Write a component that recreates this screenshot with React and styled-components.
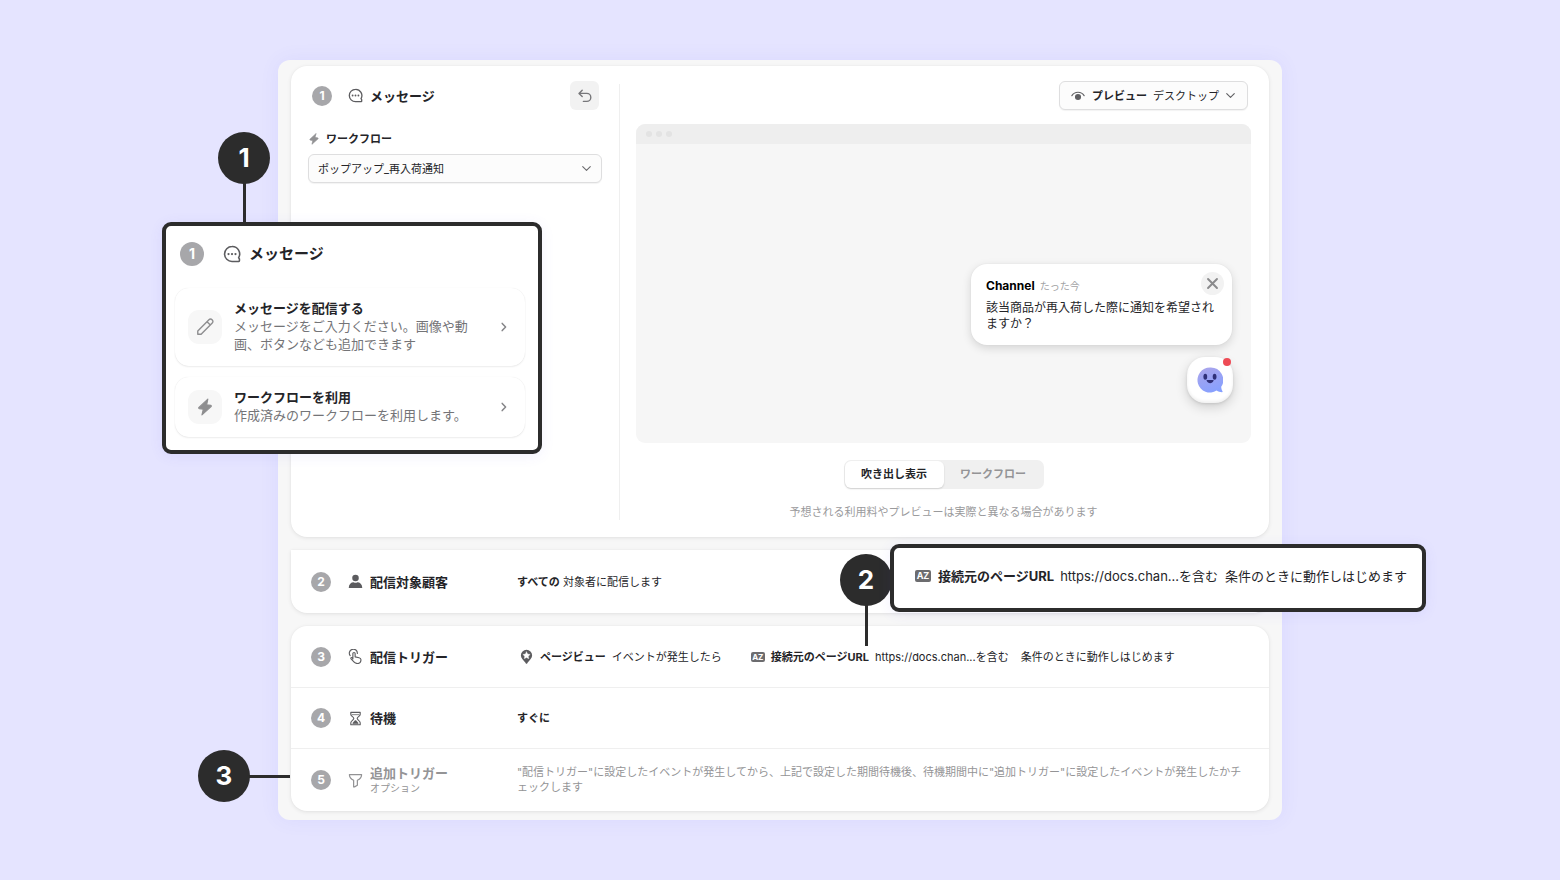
import React from 'react'
import styled, { createGlobalStyle, css } from 'styled-components'


const GlobalStyle = createGlobalStyle`
  * {
    box-sizing: border-box;
  }

  body {
    margin: 0;
    background: #e5e4ff;
    color: #242428;
    font-family: Inter, "Noto Sans CJK JP", sans-serif;
    font-size: 11px;
    line-height: 16px;
  }

  button, select {
    font: inherit;
    color: inherit;
  }

  h2, h3, p {
    margin: 0;
    font-size: inherit;
    font-weight: inherit;
  }

  svg {
    display: block;
    flex: none;
  }
`

const Page = styled.main`
  display: flex;
  justify-content: center;
  padding: 60px 24px;
`

const Panel = styled.div`
  position: relative;
  display: flex;
  flex-direction: column;
  gap: 13px;
  width: 100%;
  max-width: 1004px;
  padding: 6px 13px 9px;
  border-radius: 12px;
  background: #f7f7f7;
  box-shadow: 0 0 20px rgba(90, 80, 240, 0.07);
`

const Card = styled.section`
  border-radius: ${({ $flatTop }) => ($flatTop ? '0 0 16px 16px' : '16px')};
  background: #fff;
  box-shadow: 0 1px 4px rgba(0, 0, 0, 0.09), 0 0 2px rgba(0, 0, 0, 0.03);
`

const MessageCard = styled(Card)`
  display: flex;
`

const Settings = styled.div`
  flex: none;
  width: 328px;
  padding: 15px 17px;
`

const Divider = styled.div`
  flex: none;
  width: 1px;
  margin: 18px 0 17px;
  background: #efefef;
`

const Preview = styled.div`
  display: flex;
  flex: 1;
  flex-direction: column;
  align-items: center;
  min-width: 0;
  padding: 15px 18px 17px 16px;
`

const Head = styled.header`
  display: flex;
  align-items: center;
  height: 29px;
  padding: 0 3px 0 4px;
`

const Step = styled.span`
  display: flex;
  flex: none;
  align-items: center;
  justify-content: center;
  width: ${({ $large }) => ($large ? '24px' : '20px')};
  height: ${({ $large }) => ($large ? '24px' : '20px')};
  border-radius: 50%;
  background: #a7a7aa;
  color: #fff;
  font-size: ${({ $large }) => ($large ? '14px' : '12px')};
  font-weight: 700;
`

const HeadIcon = styled.span`
  margin: ${({ $large }) => ($large ? '0 8px 0 19px' : '0 7px 0 16px')};
  color: #5c5c5f;
`

const Title = styled.h2`
  font-size: ${({ $large }) => ($large ? '15px' : '13px')};
  font-weight: 700;
  line-height: 20px;
`

const UndoButton = styled.button`
  display: flex;
  align-items: center;
  justify-content: center;
  width: 29px;
  height: 29px;
  margin-left: auto;
  padding: 0;
  border: 0;
  border-radius: 6px;
  background: #f2f2f2;
  color: #77777a;
`

const FieldLabel = styled.label`
  display: flex;
  align-items: center;
  gap: 6px;
  height: 16px;
  margin: 21px 0 7px;
  font-weight: 700;

  svg {
    color: #929294;
  }
`

const controlFrame = css`
  height: 29px;
  border: 1px solid #dededf;
  border-radius: 6px;
  background: #fcfcfc;
  box-shadow: 0 1px 1px rgba(0, 0, 0, 0.05);
`

const SelectWrap = styled.div`
  display: grid;
  align-items: center;

  > * {
    grid-area: 1 / 1;
  }

  svg {
    justify-self: end;
    margin-right: 10px;
    color: #6b6b6e;
    pointer-events: none;
  }
`

const Select = styled.select`
  ${controlFrame}
  width: 100%;
  padding: 0 30px 0 9px;
  appearance: none;
`

const DeviceButton = styled.button`
  ${controlFrame}
  display: flex;
  align-items: center;
  align-self: flex-end;
  gap: 6px;
  margin-right: 3px;
  padding: 0 11px;

  strong {
    margin-left: 1px;
  }

  svg {
    color: #5f5f62;
  }
`

const Browser = styled.div`
  display: flex;
  flex-direction: column;
  width: 100%;
  height: 319px;
  margin: 14px 0 17px;
  border-radius: 9px;
  overflow: hidden;
  background: #f6f6f6;
`

const BrowserBar = styled.div`
  display: flex;
  align-items: center;
  gap: 4px;
  height: 20px;
  padding-left: 10px;
  background: #eeeeee;
`

const BarDot = styled.span`
  width: 6px;
  height: 6px;
  border-radius: 50%;
  background: #e3e3e3;
`

const BrowserBody = styled.div`
  display: flex;
  flex: 1;
  flex-direction: column;
  align-items: flex-end;
  justify-content: flex-end;
  gap: 12px;
  padding: 0 18px 40px;
`

const Bubble = styled.article`
  position: relative;
  width: 261px;
  margin-right: 1px;
  padding: 14px 15px 13px;
  border-radius: 16px;
  background: #fff;
  box-shadow: 0 3px 10px rgba(0, 0, 0, 0.14), 0 0 2px rgba(0, 0, 0, 0.06);
  font-size: 12px;
`

const BubbleHead = styled.header`
  display: flex;
  align-items: center;
  gap: 5px;
  height: 16px;
  margin-bottom: 6px;
  color: #000;
`

const Time = styled.time`
  color: #a3a3a5;
  font-size: 10px;
`

const CloseButton = styled.button`
  position: absolute;
  top: 8px;
  right: 8px;
  display: flex;
  align-items: center;
  justify-content: center;
  width: 23px;
  height: 23px;
  padding: 0;
  border: 0;
  border-radius: 50%;
  background: #f2f2f2;
  color: #8a8a8c;
`

const Launcher = styled.button`
  position: relative;
  display: flex;
  align-items: center;
  justify-content: center;
  width: 46px;
  height: 46px;
  padding: 0 0 1px;
  border: 0;
  border-radius: 18px;
  background: #fff;
  box-shadow: inset 0 -2px 3px rgba(0, 0, 0, 0.06), 0 4px 12px rgba(0, 0, 0, 0.16), 0 1px 3px rgba(0, 0, 0, 0.1);
`

const Unread = styled.span`
  position: absolute;
  top: 1px;
  right: 2px;
  width: 8px;
  height: 8px;
  border-radius: 50%;
  background: #ee4b55;
`

const Tabs = styled.div`
  display: flex;
  padding: 1px;
  border-radius: 7px;
  background: #f0f0f0;
`

const Tab = styled.button`
  width: 99px;
  height: 27px;
  padding: 0 0 1px;
  border: 0;
  border-radius: 6px;
  background: ${({ $active }) => ($active ? '#fff' : 'transparent')};
  box-shadow: ${({ $active }) => ($active ? '0 1px 2px rgba(0, 0, 0, 0.14)' : 'none')};
  color: ${({ $active }) => ($active ? '#242428' : '#949496')};
  font-weight: 700;
`

const Note = styled.p`
  margin-top: 15px;
  color: #9a9a9c;
`

const Row = styled.div`
  display: grid;
  grid-template-columns: 37px 22px 147px 1fr;
  align-items: center;
  min-height: ${({ $tall }) => ($tall ? '63px' : '61px')};
  padding: 0 20px;

  & + & {
    border-top: 1px solid #efefef;
  }

  &:only-child {
    min-height: 63px;
  }
`

const RowIcon = styled.span`
  color: ${({ $muted }) => ($muted ? '#929294' : '#5c5c5f')};
`

const RowTitle = styled.h2`
  color: ${({ $muted }) => ($muted ? '#949496' : 'inherit')};
  font-size: 13px;
  font-weight: 700;
`

const Optional = styled.p`
  color: #949496;
  font-size: 10px;
  line-height: 14px;
`

const Hint = styled.p`
  max-width: 732px;
  color: #949496;
  line-height: 15px;
`

const Conditions = styled.div`
  display: flex;
  align-items: center;
  gap: 29px;
  padding-left: 2px;
  white-space: nowrap;
`

const Condition = styled.p`
  display: flex;
  align-items: center;
  gap: 6px;
  font-size: ${({ $large }) => ($large ? '13px' : '11px')};
  line-height: 20px;
  white-space: nowrap;

  svg {
    color: #5c5c5f;
  }
`

const Clause = styled.span`
  margin-left: ${({ $large }) => ($large ? '1px' : '6px')};
`

const TypeBadge = styled.span`
  display: flex;
  align-items: center;
  justify-content: center;
  width: ${({ $large }) => ($large ? '16px' : '14px')};
  height: ${({ $large }) => ($large ? '12px' : '10px')};
  margin-right: ${({ $large }) => ($large ? '1px' : '0')};
  border-radius: 2px;
  background: #6c6c6f;
  color: #fff;
  font-size: ${({ $large }) => ($large ? '9px' : '8px')};
  font-weight: 700;
  line-height: 10px;
`

// annotations that float over the panel
const Callout = styled.aside`
  position: absolute;
  border: 4px solid #2c2c2c;
  border-radius: 9px;
  background: #fff;
  box-shadow: 0 2px 14px rgba(90, 80, 240, 0.08);
`

const MessageCallout = styled(Callout)`
  top: 162px;
  left: -116px;
  width: 380px;
  padding: 12px 13px 13px 9px;
`

const TriggerCallout = styled(Callout)`
  top: 484px;
  left: 612px;
  width: 536px;
  padding: 18px 0 22px 21px;
`

const CalloutHead = styled.header`
  display: flex;
  align-items: center;
  height: 32px;
  margin-bottom: 18px;
  padding-left: 5px;
`

const Option = styled.button`
  display: flex;
  align-items: center;
  width: 100%;
  margin-bottom: ${({ $last }) => ($last ? '0' : '11px')};
  padding: 11px 13px 12px;
  border: 0;
  border-radius: 14px;
  background: #fff;
  box-shadow: 0 1px 2px rgba(0, 0, 0, 0.07), 0 0 1px rgba(0, 0, 0, 0.1);
  text-align: left;

  > svg {
    color: #858588;
  }
`

const OptionIcon = styled.span`
  display: flex;
  flex: none;
  align-items: center;
  justify-content: center;
  width: 34px;
  height: 34px;
  border-radius: 11px;
  background: #f7f7f7;
  color: #8e8e90;
`

const OptionText = styled.span`
  flex: 1;
  margin: 0 18px 0 12px;
  font-size: 13px;
  line-height: 18px;
`

const OptionTitle = styled.strong`
  display: block;
  line-height: 18px;
`

const OptionDesc = styled.span`
  display: block;
  padding-bottom: 1px;
  color: #747477;
`

const Marker = styled.span`
  position: absolute;
  top: ${({ $top }) => $top}px;
  left: ${({ $left }) => $left}px;
  display: flex;
  align-items: center;
  justify-content: center;
  width: 52px;
  height: 52px;
  border-radius: 50%;
  background: #2c2c2c;
  color: #fff;
  font-size: 26px;
  font-weight: 700;

  &::after {
    content: '';
    position: absolute;
    background: #2c2c2c;
    ${({ $side }) => ($side
      ? 'top: 25px; left: 51px; width: 41px; height: 3px;'
      : 'top: 51px; left: 25px; width: 3px; height: 41px;')}
  }
`


const Icon = ({ size = 16, children }) => (
  <svg width={size} height={size} viewBox="0 0 16 16" fill="none" stroke="currentColor" strokeWidth="1.4"
    strokeLinecap="round" strokeLinejoin="round" aria-hidden="true">
    {children}
  </svg>
)

const MessageIcon = ({ size }) => (
  <Icon size={size}>
    <path d="M8 1.4a6.6 6.6 0 1 0 0 13.2h6.1a.5.5 0 0 0 .5-.5v-1.8l-.7-1A6.6 6.6 0 0 0 8 1.4Z" />
    <g fill="currentColor" stroke="none">
      <circle cx="4.9" cy="8" r="1" />
      <circle cx="8" cy="8" r="1" />
      <circle cx="11.1" cy="8" r="1" />
    </g>
  </Icon>
)

const BoltIcon = ({ size }) => (
  <Icon size={size}>
    <path d="M10.5 1 2.6 8.4c-.4.4-.2.9.3 1l3.6.6L5.3 15l8.1-7.4c.4-.4.2-.9-.3-1L9.5 6Z" fill="currentColor" strokeWidth="1" />
  </Icon>
)

const UndoIcon = () => (
  <Icon size={16}>
    <path d="M5.2 2.2 2 5.4l3.2 3.2M2.2 5.4h7.6a4 4 0 0 1 0 8H6.4" />
  </Icon>
)

const ChevronDown = () => (
  <Icon size={11}>
    <path d="m2.5 5.3 5.5 5.5 5.5-5.5" strokeWidth="1.6" />
  </Icon>
)

const ChevronRight = () => (
  <Icon size={16}>
    <path d="m6.2 4.4 3.4 3.6-3.4 3.6" strokeWidth="1.5" />
  </Icon>
)

const EyeIcon = () => (
  <Icon size={14}>
    <path d="M1 7.6C2.6 5 5.1 3.7 8 3.7s5.4 1.3 7 3.9" strokeWidth="1.3" />
    <circle cx="8" cy="9.2" r="3.5" fill="currentColor" stroke="none" />
  </Icon>
)

const CloseIcon = () => (
  <Icon size={13}>
    <path d="m2.5 2.5 11 11M13.5 2.5l-11 11" strokeWidth="2.4" />
  </Icon>
)

const PencilIcon = () => (
  <Icon size={19}>
    <path d="M1.500 14.500V11.700L10.900 2.300a1.800 1.800 0 0 1 2.600 0l.2.2a1.800 1.800 0 0 1 0 2.600L4.300 14.500ZM9.300 3.900l2.800 2.800" strokeWidth="1.2" />
  </Icon>
)

const PersonIcon = () => (
  <Icon size={15}>
    <g fill="currentColor" stroke="none">
      <circle cx="8" cy="4.2" r="3.5" />
      <path d="M.8 14.3C1 10.8 3.2 8.7 6 8.7c.7.4 1.3.5 2 .5s1.3-.1 2-.5c2.8 0 5 2.1 5.2 5.6 0 .4-.2.7-.6.7H1.4c-.4 0-.6-.3-.6-.7Z" />
    </g>
  </Icon>
)

const TapIcon = () => (
  <Icon size={15}>
    <path d="M2.3 7.1a4.3 4.3 0 1 1 7.7-2.3" strokeWidth="1.2" />
    <path d="M5.2 10.700V4.900a1.200 1.200 0 0 1 2.400 0v3.500l4.200.9c1.400.3 2.200 1.200 2 2.600-.2 2.300-1.400 3.600-3.600 3.600-1.800 0-2.900-.5-3.900-1.700l-3-3.300c-.7-.9.4-1.900 1.300-1.200Z" strokeWidth="1.2" />
  </Icon>
)

const PinIcon = () => (
  <Icon size={15}>
    <path d="M8 .8a6 6 0 0 0-6 6c0 3.100 3.100 5.300 4.700 7.700l.6.9c.3.5 1.100.5 1.400 0l.6-.9C10.900 12.100 14 9.900 14 6.800a6 6 0 0 0-6-6Z" fill="currentColor" stroke="none" />
    <path d="m8 3 1.200 2.400 2.700.4-2 1.900.5 2.600L8 9.100l-2.400 1.200.5-2.600-2-1.900 2.700-.4Z" fill="#fff" stroke="#fff" strokeWidth=".4" />
  </Icon>
)

const HourglassIcon = () => (
  <Icon size={15}>
    <path d="M3 1.400h10v2.200c0 1.900-3.200 2.900-3.200 4.400s3.200 2.500 3.200 4.400v2.200H3v-2.200C3 10.500 6.200 9.500 6.200 8S3 5.500 3 3.600Z" strokeWidth="1.2" />
    <path d="M4.400 3.900h7.200M5.300 13.200c.2-1.300 1.300-2.200 2.700-3 1.400.8 2.500 1.700 2.700 3Z" fill="currentColor" strokeWidth=".8" />
  </Icon>
)

const FilterIcon = () => (
  <Icon size={15}>
    <path d="M1.500 1.800h13c0 2.400-1.500 4.500-4.500 5.900v5.400l-3 1.700h-1V7.700C3 6.300 1.500 4.200 1.500 1.800Z" strokeWidth="1.3" />
  </Icon>
)

const Mascot = () => (
  <svg width="26" height="26" viewBox="0 0 26 26" aria-hidden="true">
    <defs>
      <linearGradient id="mascot" x1="0.3" y1="0" x2="0.7" y2="1">
        <stop offset="0" stopColor="#a9a5ec" />
        <stop offset="1" stopColor="#86a0ff" />
      </linearGradient>
    </defs>
    <path d="M13 .5a12.500 12.500 0 1 0 6.600 23.100c1.500.9 3.400 1.600 5.400 1.600.6 0 .8-.6.500-1-.8-1-1.200-2.500-1.300-4.400A12.500 12.500 0 0 0 13 .5Z" fill="url(#mascot)" />
    <ellipse cx="8.3" cy="9.7" rx="1.9" ry="3" fill="#303078" />
    <ellipse cx="17.6" cy="9.7" rx="1.9" ry="3" fill="#303078" />
    <path d="M10 13.1h6.2c.4 0 .6.4.4.7-.7 1.4-2 2.4-3.500 2.400s-2.800-1-3.500-2.400c-.2-.3 0-.7.4-.7Z" fill="#303078" />
  </svg>
)


const UrlCondition = ({ large }) => (
  <Condition $large={large}>
    <TypeBadge $large={large}>AZ</TypeBadge>
    <strong>接続元のページURL</strong>
    <span>https://docs.chan...を含む</span>
    <Clause $large={large}>条件のときに動作しはじめます</Clause>
  </Condition>
)

const OptionButton = ({ icon, title, desc, last }) => (
  <Option type="button" $last={last}>
    <OptionIcon>{icon}</OptionIcon>
    <OptionText>
      <OptionTitle>{title}</OptionTitle>
      <OptionDesc>{desc}</OptionDesc>
    </OptionText>
    <ChevronRight />
  </Option>
)

const StepRow = ({ number, icon, title, optional, children }) => (
  <Row $tall={optional}>
    <Step>{number}</Step>
    <RowIcon $muted={optional}>{icon}</RowIcon>
    <div>
      <RowTitle $muted={optional}>{title}</RowTitle>
      {optional && <Optional>オプション</Optional>}
    </div>
    {children}
  </Row>
)

const App = () => {
  return (
    <>
      <GlobalStyle />
      <Page>
        <Panel>
          <MessageCard>
            <Settings>
              <Head>
                <Step>1</Step>
                <HeadIcon><MessageIcon size={15} /></HeadIcon>
                <Title>メッセージ</Title>
                <UndoButton type="button" aria-label="元に戻す"><UndoIcon /></UndoButton>
              </Head>
              <FieldLabel htmlFor="workflow">
                <BoltIcon size={12} />
                ワークフロー
              </FieldLabel>
              <SelectWrap>
                <Select id="workflow">
                  <option>ポップアップ_再入荷通知</option>
                </Select>
                <ChevronDown />
              </SelectWrap>
            </Settings>

            <Divider />

            <Preview>
              <DeviceButton type="button" aria-haspopup="listbox">
                <EyeIcon />
                <strong>プレビュー</strong>
                <span>デスクトップ</span>
                <ChevronDown />
              </DeviceButton>
              <Browser>
                <BrowserBar>
                  <BarDot />
                  <BarDot />
                  <BarDot />
                </BrowserBar>
                <BrowserBody>
                  <Bubble>
                    <BubbleHead>
                      <strong>Channel</strong>
                      <Time>たった今</Time>
                    </BubbleHead>
                    <p>該当商品が再入荷した際に通知を希望されますか？</p>
                    <CloseButton type="button" aria-label="閉じる"><CloseIcon /></CloseButton>
                  </Bubble>
                  <Launcher type="button" aria-label="チャットを開く">
                    <Mascot />
                    <Unread />
                  </Launcher>
                </BrowserBody>
              </Browser>
              <Tabs role="tablist">
                <Tab type="button" role="tab" aria-selected="true" $active>吹き出し表示</Tab>
                <Tab type="button" role="tab" aria-selected="false">ワークフロー</Tab>
              </Tabs>
              <Note>予想される利用料やプレビューは実際と異なる場合があります</Note>
            </Preview>
          </MessageCard>

          <Card $flatTop>
            <StepRow number={2} icon={<PersonIcon />} title="配信対象顧客">
              <p><strong>すべての</strong> 対象者に配信します</p>
            </StepRow>
          </Card>

          <Card>
            <StepRow number={3} icon={<TapIcon />} title="配信トリガー">
              <Conditions>
                <Condition>
                  <PinIcon />
                  <strong>ページビュー</strong>
                  <span>イベントが発生したら</span>
                </Condition>
                <UrlCondition />
              </Conditions>
            </StepRow>
            <StepRow number={4} icon={<HourglassIcon />} title="待機">
              <p><strong>すぐに</strong></p>
            </StepRow>
            <StepRow number={5} icon={<FilterIcon />} title="追加トリガー" optional>
              <Hint>
                "配信トリガー"に設定したイベントが発生してから、上記で設定した期間待機後、待機期間中に"追加トリガー"に設定したイベントが発生したかチ<br />
                ェックします
              </Hint>
            </StepRow>
          </Card>

          <Marker $top={72} $left={-60}>1</Marker>
          <Marker $top={494} $left={562}>2</Marker>
          <Marker $top={690} $left={-80} $side>3</Marker>

          <MessageCallout>
            <CalloutHead>
              <Step $large>1</Step>
              <HeadIcon $large><MessageIcon size={18} /></HeadIcon>
              <Title $large>メッセージ</Title>
            </CalloutHead>
            <OptionButton
              icon={<PencilIcon />}
              title="メッセージを配信する"
              desc="メッセージをご入力ください。画像や動画、ボタンなども追加できます"
            />
            <OptionButton
              icon={<BoltIcon size={18} />}
              title="ワークフローを利用"
              desc="作成済みのワークフローを利用します。"
              last
            />
          </MessageCallout>

          <TriggerCallout>
            <UrlCondition large />
          </TriggerCallout>
        </Panel>
      </Page>
    </>
  )
}

export default App
